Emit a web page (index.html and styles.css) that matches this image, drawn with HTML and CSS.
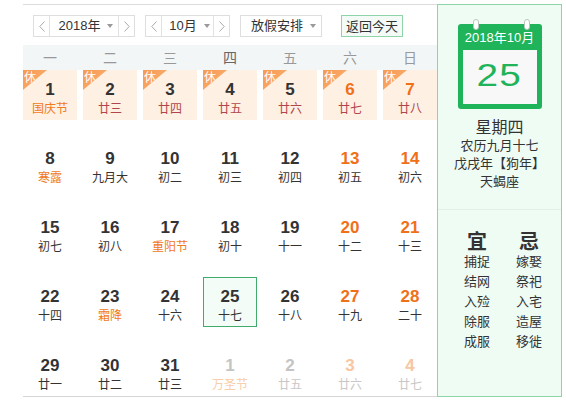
FILE: index.html
```html
<!DOCTYPE html>
<html lang="zh-CN">
<head>
<meta charset="utf-8">
<title>万年历</title>
<link rel="stylesheet" href="styles.css">
</head>
<body>
<div class="wrap">
  <div class="cal">
    <div class="toolbar">
      <div class="sel sel-year">
        <span class="arr arr-l"><svg width="6" height="11" viewBox="0 0 6 11"><polyline points="5.5,0.5 0.8,5.5 5.5,10.5" fill="none" stroke="#aaa" stroke-width="1"/></svg></span>
        <span class="mid">2018年<i class="caret"></i></span>
        <span class="arr arr-r"><svg width="6" height="11" viewBox="0 0 6 11"><polyline points="0.5,0.5 5.2,5.5 0.5,10.5" fill="none" stroke="#aaa" stroke-width="1"/></svg></span>
      </div>
      <div class="sel sel-month">
        <span class="arr arr-l"><svg width="6" height="11" viewBox="0 0 6 11"><polyline points="5.5,0.5 0.8,5.5 5.5,10.5" fill="none" stroke="#aaa" stroke-width="1"/></svg></span>
        <span class="mid">10月<i class="caret"></i></span>
        <span class="arr arr-r"><svg width="6" height="11" viewBox="0 0 6 11"><polyline points="0.5,0.5 5.2,5.5 0.5,10.5" fill="none" stroke="#aaa" stroke-width="1"/></svg></span>
      </div>
      <div class="sel sel-holiday"><span class="mid">放假安排<i class="caret"></i></span></div>
      <div class="btn-today">返回今天</div>
    </div>
    <div class="weekhead">
      <div>一</div><div>二</div><div>三</div><div class="cur">四</div><div>五</div><div>六</div><div>日</div>
    </div>
    <div class="grid">
      <div class="cell rest"><span class="tag">休</span><b class="num">1</b><span class="lun fest">国庆节</span></div>
      <div class="cell rest"><span class="tag">休</span><b class="num">2</b><span class="lun">廿三</span></div>
      <div class="cell rest"><span class="tag">休</span><b class="num">3</b><span class="lun">廿四</span></div>
      <div class="cell rest"><span class="tag">休</span><b class="num">4</b><span class="lun">廿五</span></div>
      <div class="cell rest"><span class="tag">休</span><b class="num">5</b><span class="lun">廿六</span></div>
      <div class="cell rest wk"><span class="tag">休</span><b class="num">6</b><span class="lun">廿七</span></div>
      <div class="cell rest wk"><span class="tag">休</span><b class="num">7</b><span class="lun">廿八</span></div>

      <div class="cell"><b class="num">8</b><span class="lun fest">寒露</span></div>
      <div class="cell"><b class="num">9</b><span class="lun">九月大</span></div>
      <div class="cell"><b class="num">10</b><span class="lun">初二</span></div>
      <div class="cell"><b class="num">11</b><span class="lun">初三</span></div>
      <div class="cell"><b class="num">12</b><span class="lun">初四</span></div>
      <div class="cell wk"><b class="num">13</b><span class="lun">初五</span></div>
      <div class="cell wk"><b class="num">14</b><span class="lun">初六</span></div>

      <div class="cell"><b class="num">15</b><span class="lun">初七</span></div>
      <div class="cell"><b class="num">16</b><span class="lun">初八</span></div>
      <div class="cell"><b class="num">17</b><span class="lun fest">重阳节</span></div>
      <div class="cell"><b class="num">18</b><span class="lun">初十</span></div>
      <div class="cell"><b class="num">19</b><span class="lun">十一</span></div>
      <div class="cell wk"><b class="num">20</b><span class="lun">十二</span></div>
      <div class="cell wk"><b class="num">21</b><span class="lun">十三</span></div>

      <div class="cell"><b class="num">22</b><span class="lun">十四</span></div>
      <div class="cell"><b class="num">23</b><span class="lun fest">霜降</span></div>
      <div class="cell"><b class="num">24</b><span class="lun">十六</span></div>
      <div class="cell today"><b class="num">25</b><span class="lun">十七</span></div>
      <div class="cell"><b class="num">26</b><span class="lun">十八</span></div>
      <div class="cell wk"><b class="num">27</b><span class="lun">十九</span></div>
      <div class="cell wk"><b class="num">28</b><span class="lun">二十</span></div>

      <div class="cell"><b class="num">29</b><span class="lun">廿一</span></div>
      <div class="cell"><b class="num">30</b><span class="lun">廿二</span></div>
      <div class="cell"><b class="num">31</b><span class="lun">廿三</span></div>
      <div class="cell other"><b class="num">1</b><span class="lun fest">万圣节</span></div>
      <div class="cell other"><b class="num">2</b><span class="lun">廿五</span></div>
      <div class="cell other wk"><b class="num">3</b><span class="lun">廿六</span></div>
      <div class="cell other wk"><b class="num">4</b><span class="lun">廿七</span></div>
    </div>
  </div>

  <div class="panel">
    <div class="icon">
      <i class="ring ring-l"></i><i class="ring ring-r"></i>
      <div class="icon-top">2018年10月</div>
      <div class="icon-body"><span class="big">25</span></div>
    </div>
    <div class="weekday">星期四</div>
    <div class="info">农历九月十七</div>
    <div class="info">戊戌年【狗年】</div>
    <div class="info">天蝎座</div>
    <div class="divider"></div>
    <div class="yiji">
      <div class="col">
        <div class="yj-title">宜</div>
        <div>捕捉</div><div>结网</div><div>入殓</div><div>除服</div><div>成服</div>
      </div>
      <div class="col">
        <div class="yj-title">忌</div>
        <div>嫁娶</div><div>祭祀</div><div>入宅</div><div>造屋</div><div>移徙</div>
      </div>
    </div>
  </div>
</div>
</body>
</html>
```

FILE: styles.css
```css
html, body {
  margin: 0;
  padding: 0;
  background: #fff;
}
body {
  font-family: "Noto Sans CJK SC", "Liberation Sans", sans-serif;
  color: #333;
}
.wrap {
  display: flex;
  align-items: flex-start;
  padding: 4px 0 0 23px;
}
.cal {
  width: 414px;
  border-top: 1px solid #dcdcdc;
  border-bottom: 1px solid #d6d6d6;
}
.toolbar {
  height: 40px;
  box-sizing: border-box;
  padding: 10px 0 0 10px;
  display: flex;
  align-items: flex-start;
}
.sel {
  display: flex;
  height: 22px;
  box-sizing: border-box;
  border: 1px solid #dedede;
  background: #fff;
  font-family: "Liberation Sans", "Noto Sans CJK SC", sans-serif;
  font-size: 13px;
  color: #333;
}
.sel-year { width: 102px; }
.sel-month { width: 85px; margin-left: 10px; }
.sel-holiday { width: 82px; margin-left: 10px; }
.arr {
  width: 16px;
  box-sizing: border-box;
  display: flex;
  align-items: center;
  justify-content: center;
}
.arr-l { border-right: 1px solid #e2e2e2; }
.arr-r { border-left: 1px solid #e2e2e2; }
.mid {
  flex: 1;
  display: flex;
  align-items: center;
  justify-content: center;
  line-height: 20px;
  padding-left: 4px;
}
.sel-holiday .mid {
  justify-content: flex-start;
  padding-left: 10px;
}
.caret {
  display: inline-block;
  width: 0;
  height: 0;
  margin-left: 7px;
  border-top: 4px solid #9a9a9a;
  border-left: 3.5px solid transparent;
  border-right: 3.5px solid transparent;
}
.btn-today {
  width: 62px;
  height: 22px;
  box-sizing: border-box;
  margin-left: 19px;
  border: 1px solid #8fd3a9;
  background: #f4fbf6;
  font-size: 13px;
  line-height: 20px;
  text-align: center;
  color: #333;
}
.weekhead {
  height: 25px;
  background: #f3f6f7;
  display: grid;
  grid-template-columns: repeat(7, 54px);
  column-gap: 6px;
  font-size: 14px;
  line-height: 25px;
  color: #999;
  text-align: center;
}
.weekhead .cur { color: #666; }
.grid {
  display: grid;
  grid-template-columns: repeat(7, 54px);
  grid-auto-rows: 50px;
  column-gap: 6px;
  row-gap: 19px;
}
.cell {
  position: relative;
  box-sizing: border-box;
  display: flex;
  flex-direction: column;
  align-items: center;
  padding-top: 10px;
}
.num {
  font-family: "Liberation Sans", Arial, sans-serif;
  font-weight: bold;
  font-size: 17px;
  line-height: 20px;
  color: #333;
}
.lun {
  font-size: 12px;
  line-height: 16px;
  color: #333;
}
.wk .num { color: #f07018; }
.fest { color: #f07a20; }
.rest { background: #fff0e4; }
.rest .lun { color: #b0454c; }
.rest .lun.fest { color: #f07a20; }
.tag {
  position: absolute;
  left: 0;
  top: 0;
  width: 24px;
  height: 20px;
  background: linear-gradient(135deg, #f69a52, #fbb275);
  clip-path: polygon(0 0, 100% 0, 0 100%);
  color: #fff;
  font-size: 12px;
  line-height: 14px;
  padding-left: 1px;
  box-sizing: border-box;
}
.today {
  border: 1px solid #3fab6c;
  background: #f3fcf6;
  padding-top: 9px;
}
.other .num { color: #c4c4c4; }
.other .lun { color: #c8c8c8; }
.other .lun.fest { color: #f8cda9; }
.other.wk .num { color: #f9c6a2; }

.panel {
  width: 125px;
  height: 393px;
  box-sizing: border-box;
  border: 1px solid #8dd4a6;
  background: #effcf4;
  display: flex;
  flex-direction: column;
  align-items: center;
  font-family: "Liberation Sans", "Noto Sans CJK SC", sans-serif;
}
.icon {
  position: relative;
  margin-top: 19px;
  width: 84px;
  height: 85px;
  box-sizing: border-box;
  background: #1fb35a;
  border-radius: 3px;
  padding: 0 5px 5px;
  display: flex;
  flex-direction: column;
}
.ring {
  position: absolute;
  top: -5px;
  width: 6px;
  height: 11px;
  box-sizing: border-box;
  border: 1px solid #b9c6be;
  border-radius: 3px;
  background: #fff;
}
.ring-l { left: 15px; }
.ring-r { right: 12px; }
.icon-top {
  height: 26px;
  line-height: 28px;
  text-align: center;
  color: #fff;
  font-size: 13px;
}
.icon-body {
  flex: 1;
  background: #f8f8f8;
  display: flex;
  align-items: center;
  justify-content: center;
}
.big {
  display: inline-block;
  font-size: 31px;
  line-height: 30px;
  color: #1fb35a;
  transform: scaleX(1.25);
  letter-spacing: 1px;
  margin-top: -3px;
}
.weekday {
  margin-top: 10px;
  font-size: 16px;
  line-height: 18px;
  color: #333;
}
.info {
  font-size: 13px;
  line-height: 18px;
  color: #333;
}
.divider {
  align-self: stretch;
  height: 1px;
  background: #e1f1e7;
  margin-top: 18px;
}
.yiji {
  align-self: stretch;
  display: flex;
  padding-left: 12px;
  margin-top: 22px;
}
.col {
  width: 54px;
  text-align: center;
  font-size: 13px;
  line-height: 20px;
  color: #333;
}
.col + .col { margin-left: -2px; }
.yj-title {
  font-size: 20px;
  font-weight: bold;
  line-height: 20px;
  color: #333;
}
```
